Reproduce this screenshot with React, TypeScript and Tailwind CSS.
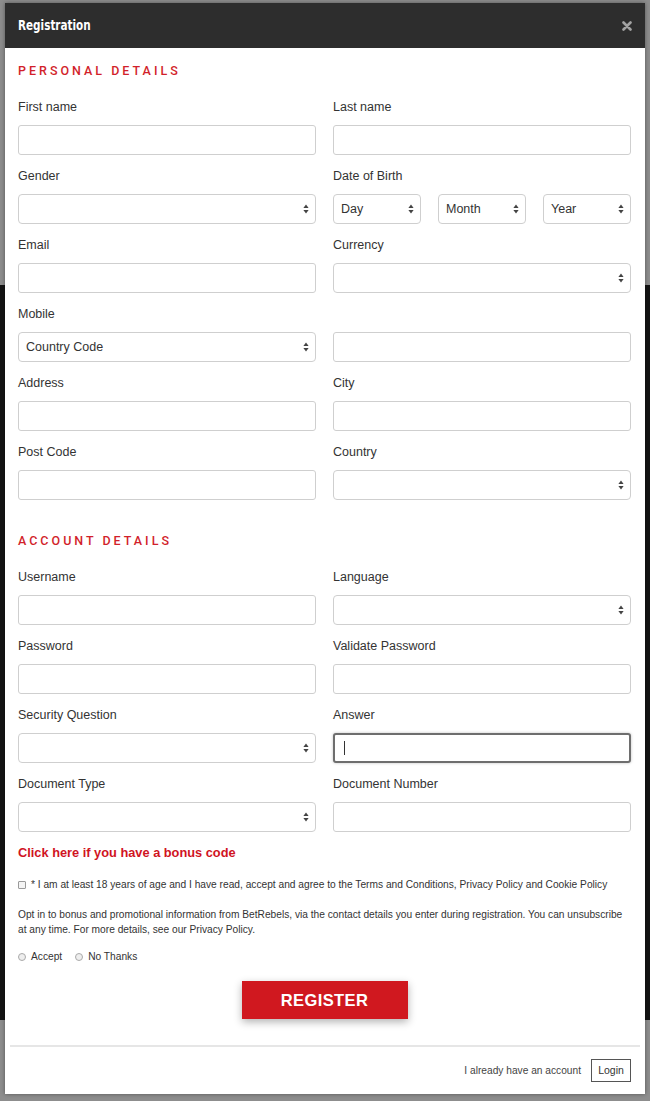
import React from "react";

// Small up/down arrow shown on the right of every select box
function SelectArrows() {
  return (
    <svg width="6" height="10" viewBox="0 0 6 10" className="shrink-0">
      <path d="M3 0.5 L5.6 4 L0.4 4 Z" fill="#444" />
      <path d="M3 9.5 L5.6 6 L0.4 6 Z" fill="#444" />
    </svg>
  );
}

function TextInput({ active }: { active?: boolean }) {
  return active ? (
    <div className="h-[30px] w-full border-2 border-[#6e6e6e] rounded-[3px] bg-white flex items-center pl-[9px] shadow-[0_0_3px_rgba(0,0,0,0.25)]">
      <span className="block w-[1px] h-[14px] bg-[#333]" />
    </div>
  ) : (
    <div className="h-[30px] w-full border border-[#cfcfcf] rounded-[3px] bg-white" />
  );
}

function SelectBox({ value }: { value?: string }) {
  return (
    <div className="h-[30px] w-full border border-[#cfcfcf] rounded-[4px] bg-white flex items-center justify-between pl-[7px] pr-[6px] text-[12.5px] text-[#333]">
      <span>{value ?? ""}</span>
      <SelectArrows />
    </div>
  );
}

function Field({ label, children }: { label: string; children: React.ReactNode }) {
  return (
    <div className="flex flex-col mb-[13px]">
      <label className="h-[16px] leading-[16px] text-[12.5px] text-[#333] mb-[10px]">{label}</label>
      {children}
    </div>
  );
}

function SectionTitle({ text, className }: { text: string; className?: string }) {
  return (
    <h2
      className={`h-[16px] leading-[16px] text-[12.5px] font-medium tracking-[0.24em] text-[#d21f2b] font-['Roboto',sans-serif] ${className ?? ""}`}
    >
      {text}
    </h2>
  );
}

export default function App() {
  return (
    <div className="w-[650px] h-[1101px] overflow-hidden bg-[linear-gradient(to_bottom,#8d8d8d_0px,#8d8d8d_285px,#141414_285px,#141414_1020px,#8d8d8d_1020px)] font-['Liberation_Sans',Arial,sans-serif] pt-[3px] pl-[5px]">
      <div className="w-[640px] bg-white shadow-[0_0_4px_rgba(0,0,0,0.4)]">
        {/* Header */}
        <div className="h-[45px] bg-[#2d2d2d] flex items-center justify-between pl-[13px] pr-[13px]">
          <span className="inline-block origin-left scale-x-[0.8] text-white font-bold text-[14.5px] font-['DejaVu_Sans_Condensed','Liberation_Sans',sans-serif]">
            Registration
          </span>
          <svg width="10" height="10" viewBox="0 0 10 10">
            <path d="M1.5 1.5 L8.5 8.5 M8.5 1.5 L1.5 8.5" stroke="#a3a3a3" strokeWidth="2.6" strokeLinecap="round" />
          </svg>
        </div>

        {/* Body */}
        <div className="pl-[13px] pr-[14px] pt-[15px]">
          <SectionTitle text="PERSONAL DETAILS" className="mb-[20px]" />

          <div className="grid grid-cols-2 gap-x-[17px]">
            <Field label="First name">
              <TextInput />
            </Field>
            <Field label="Last name">
              <TextInput />
            </Field>

            <Field label="Gender">
              <SelectBox />
            </Field>
            <Field label="Date of Birth">
              <div className="grid grid-cols-3 gap-x-[17px]">
                <SelectBox value="Day" />
                <SelectBox value="Month" />
                <SelectBox value="Year" />
              </div>
            </Field>

            <Field label="Email">
              <TextInput />
            </Field>
            <Field label="Currency">
              <SelectBox />
            </Field>

            <Field label="Mobile">
              <SelectBox value="Country Code" />
            </Field>
            <div className="flex flex-col mb-[13px] pt-[26px]">
              <TextInput />
            </div>

            <Field label="Address">
              <TextInput />
            </Field>
            <Field label="City">
              <TextInput />
            </Field>

            <Field label="Post Code">
              <TextInput />
            </Field>
            <Field label="Country">
              <SelectBox />
            </Field>
          </div>

          <SectionTitle text="ACCOUNT DETAILS" className="mt-[20px] mb-[20px]" />

          <div className="grid grid-cols-2 gap-x-[17px]">
            <Field label="Username">
              <TextInput />
            </Field>
            <Field label="Language">
              <SelectBox />
            </Field>

            <Field label="Password">
              <TextInput />
            </Field>
            <Field label="Validate Password">
              <TextInput />
            </Field>

            <Field label="Security Question">
              <SelectBox />
            </Field>
            <Field label="Answer">
              <TextInput active />
            </Field>

            <Field label="Document Type">
              <SelectBox />
            </Field>
            <Field label="Document Number">
              <TextInput />
            </Field>
          </div>

          <a className="block h-[16px] leading-[16px] text-[12.8px] font-bold text-[#d0141f]">
            Click here if you have a bonus code
          </a>

          <div className="mt-[17px] h-[14px] flex items-center gap-[5px] text-[10.2px] text-[#333]">
            <span className="block w-[8px] h-[8px] border border-[#9a9a9a] rounded-[1px] bg-[#f4f4f4]" />
            <span>
              * I am at least 18 years of age and I have read, accept and agree to the Terms and Conditions, Privacy
              Policy and Cookie Policy
            </span>
          </div>

          <p className="mt-[15px] text-[10.2px] leading-[15px] text-[#333]">
            Opt in to bonus and promotional information from BetRebels, via the contact details you enter during
            registration. You can unsubscribe at any time. For more details, see our Privacy Policy.
          </p>

          <div className="mt-[13px] h-[14px] flex items-center text-[10.2px] text-[#333]">
            <span className="block w-[8px] h-[8px] rounded-full border border-[#aaa] bg-[#eee] mr-[5px]" />
            <span className="mr-[13px]">Accept</span>
            <span className="block w-[8px] h-[8px] rounded-full border border-[#aaa] bg-[#eee] mr-[5px]" />
            <span>No Thanks</span>
          </div>

          <div className="mt-[17px] flex justify-center">
            <button className="w-[166px] h-[38px] bg-[#d0181f] text-white font-bold text-[16.5px] tracking-[0.4px] shadow-[0_3px_8px_rgba(0,0,0,0.3)] font-['Liberation_Sans',Arial,sans-serif]">
              REGISTER
            </button>
          </div>
        </div>

        {/* Footer */}
        <div className="mt-[26px] px-[5px]">
          <div className="h-[2px] bg-[#e6e6e6]" />
        </div>
        <div className="flex items-center justify-end gap-[10px] pr-[14px] pt-[12px] pb-[12px]">
          <span className="text-[10.2px] text-[#444]">I already have an account</span>
          <button className="w-[40px] h-[23px] border border-[#555] text-[10.5px] text-[#333] bg-white">Login</button>
        </div>
      </div>
    </div>
  );
}
